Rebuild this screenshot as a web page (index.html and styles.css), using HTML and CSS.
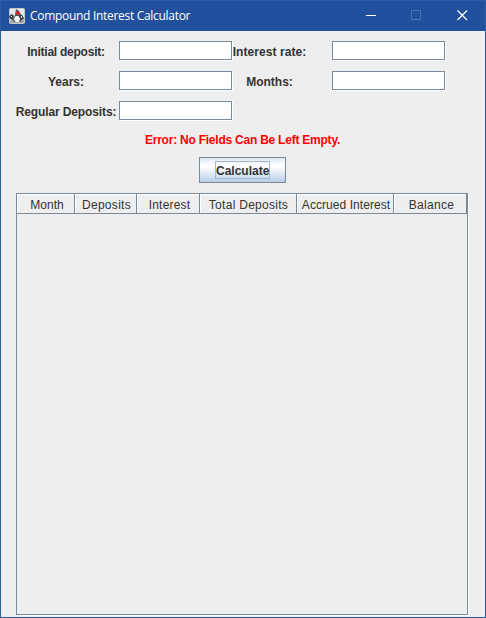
FILE: index.html
```html
<!DOCTYPE html>
<html lang="en">
<head>
<meta charset="utf-8">
<title>Compound Interest Calculator</title>
<link rel="stylesheet" href="styles.css">
</head>
<body>
<div class="window">
  <header class="titlebar">
    <svg class="app-icon" width="16" height="16" viewBox="0 0 16 16">
      <rect x=".5" y=".5" width="15" height="15" rx="1" fill="#e6e9ea" stroke="#c3c7c8"/>
      <path d="M1 12h14v3H1z" fill="#a4abb0"/>
      <path d="M7 1l3 2 2 4 1 5-2 2H5l-1-3 2-4z" fill="#4b535b"/>
      <path d="M6.500 8l3 0 1.500 3-1 3H6.500L5 11z" fill="#f4f5f5"/>
      <path d="M0 8l3-2 2 2-1 4-3-1zM11 6l2 1 2 3-1 2-3-1z" fill="#3d444b"/>
      <path d="M2 8h1v1H2zM12 8h1v2h-1z" fill="#ddd"/>
      <path d="M7.500 3.500h2.500l.8 1.500-1 2H8L7 5z" fill="#e1202b"/>
    </svg>
    <span class="title">Compound Interest Calculator</span>
    <div class="controls">
      <svg width="46" height="30" viewBox="0 0 46 30"><path d="M18 14.500h10" stroke="#fff"/></svg>
      <svg width="46" height="30" viewBox="0 0 46 30"><path d="M17.500 9.500h9v9h-9z" fill="none" stroke="#4c72b1"/></svg>
      <svg width="46" height="30" viewBox="0 0 46 30"><path d="M17.500 9.500l9.500 9.500M27 9.500L17.500 19" stroke="#fff" stroke-width="1.2"/></svg>
    </div>
  </header>
  <main class="content">
    <form class="form">
      <label for="initial"><span class="initial">Initial deposit:</span></label><input id="initial" type="text">
      <label for="rate"><span class="rate">Interest rate:</span></label><input id="rate" type="text">
      <label for="years"><span>Years:</span></label><input id="years" type="text">
      <label for="months"><span>Months:</span></label><input id="months" type="text">
      <label for="regular"><span class="regular">Regular Deposits:</span></label><input id="regular" type="text">
    </form>
    <p class="error">Error: No Fields Can Be Left Empty.</p>
    <button class="calculate" type="button"><span>Calculate</span></button>
    <section class="table">
      <div class="head">
        <div>Month</div><div class="deposits">Deposits</div><div class="interest">Interest</div><div class="total">Total Deposits</div><div class="accrued">Accrued Interest</div><div class="balance">Balance</div>
      </div>
    </section>
  </main>
</div>
</body>
</html>
```
FILE: styles.css
```css
* { box-sizing: border-box; }
body { margin: 0; font: 12px "Liberation Sans", sans-serif; color: #333; }
.window { width: 486px; height: 618px; border: 1px solid #2c5ca6; background: #eee; overflow: hidden; }
.titlebar { display: flex; align-items: center; height: 30px; padding-left: 8px; background: #21519c; color: #fff; }
.app-icon { flex: none; }
.title { margin-left: 5px; font: 12px/30px "Open Sans", sans-serif; letter-spacing: -.3px; white-space: nowrap; }
.controls { display: flex; margin-left: auto; margin-right: -1px; }
.content { display: flex; flex-direction: column; align-items: center; padding-top: 10px; }
.form {
  display: grid; grid-template-columns: 103px 113px 100px 113px; grid-auto-rows: 19px; row-gap: 11px;
  align-self: flex-start; margin-left: 15px;
}
.form label { display: flex; justify-content: center; padding-right: 3px; font-weight: bold; line-height: 22px; white-space: nowrap; }
.form label[for="rate"], .form label[for="months"] { padding-right: 25px; }
.form input { width: 113px; height: 19px; margin: 0; padding: 0 3px; border: 1px solid #7a8a99; border-radius: 0; background: #fff; box-shadow: 1px 1px #fff; outline: 0; }
.initial { letter-spacing: -.24px; }
.rate { letter-spacing: .06px; }
.regular { letter-spacing: -.12px; }
.error { margin: 13px 1px 0 0; font-weight: bold; line-height: 14px; letter-spacing: -.23px; color: #f00; }
.calculate {
  display: flex; align-items: center; justify-content: center; width: 87px; height: 26px; margin: 10px 1px 0 0; padding: 0;
  border: 1px solid #7a8a99; background: linear-gradient(#dde8f3 0, #fff 30%, #fff 36%, #b8cfe5 100%);
  font: bold 12px "Liberation Sans", sans-serif; color: #333;
}
.calculate span { width: 55px; height: 18px; border: 1px solid #a3b8cc; line-height: 18px; text-align: center; }
.table { align-self: flex-start; width: 452px; height: 422px; margin: 10px 0 0 15px; border: 1px solid #7a8a99; box-shadow: 1px 1px #fff; }
.head { display: grid; grid-template-columns: 58px 62px 63px 97px 97px 73px; grid-template-rows: 20px; }
.head div {
  border-right: 1px solid #7a8a99; border-bottom: 1px solid #7a8a99;
  box-shadow: inset 1px 1px #fff; line-height: 22px; text-align: center; white-space: nowrap;
  padding-left: 3px;
}
.head .deposits { padding-left: 2px; letter-spacing: .3px; }
.head .interest { letter-spacing: .2px; }
.head .total { padding-left: 1px; letter-spacing: .28px; }
.head .accrued { padding-left: 2px; letter-spacing: .06px; }
.head .balance { letter-spacing: .3px; }
```
